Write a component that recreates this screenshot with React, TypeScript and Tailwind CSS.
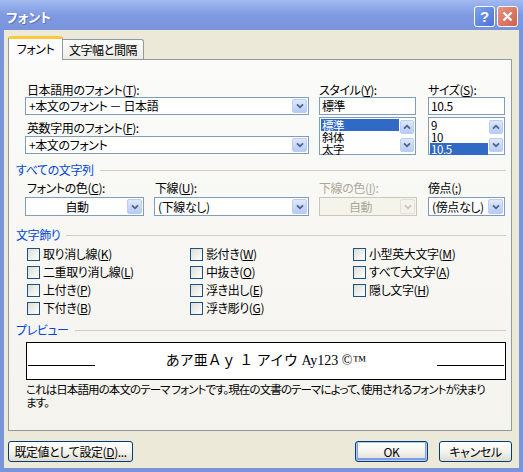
import React from 'react';

const ui = "font-['Noto_Sans_CJK_JP',sans-serif] [font-feature-settings:'palt'] text-[12px] tracking-[-0.4px] text-black";

function Chevron({ up, color = '#4d6185' }: { up?: boolean; color?: string }) {
  return (
    <svg width="8" height="6" viewBox="0 0 8 6">
      <path d={up ? 'M1 4.7 L4 1.7 L7 4.7' : 'M1 1.3 L4 4.3 L7 1.3'} fill="none" stroke={color} strokeWidth="1.8" />
    </svg>
  );
}

function DropBtn({ disabled }: { disabled?: boolean }) {
  if (disabled) {
    return (
      <div className="w-[15px] h-full rounded-[2px] border border-[#e3e1d6] bg-[#f3f2ec] flex items-center justify-center">
        <Chevron color="#c9c7ba" />
      </div>
    );
  }
  return (
    <div className="w-[15px] h-full rounded-[2px] border border-[#bccdf3] bg-gradient-to-b from-[#dfe8fd] to-[#b7cbf6] flex items-center justify-center">
      <Chevron />
    </div>
  );
}

function ScrollBtn({ up }: { up?: boolean }) {
  return (
    <div className="w-[14px] h-[14px] rounded-[2px] border border-[#bccdf3] bg-gradient-to-b from-[#dfe8fd] to-[#b7cbf6] flex items-center justify-center">
      <Chevron up={up} />
    </div>
  );
}

function Combo({
  text,
  center,
  disabled,
  className = '',
}: {
  text: string;
  center?: boolean;
  disabled?: boolean;
  className?: string;
}) {
  return (
    <div
      className={`flex p-px border ${disabled ? 'border-[#c9c7ba] bg-[#f5f4ea] text-[#aca899]' : 'border-[#7f9db9] bg-white'} ${className}`}
    >
      <div className={`flex-1 flex items-center px-[2px] leading-[14px] whitespace-nowrap ${center ? 'justify-center' : ''}`}>
        {text}
      </div>
      <DropBtn disabled={disabled} />
    </div>
  );
}

function ListBox({ items, selected }: { items: string[]; selected: number }) {
  return (
    <div className="mt-[2px] h-[38px] flex border border-[#7f9db9] bg-white p-px">
      <div className="flex-1 flex flex-col">
        {items.map((it, i) => (
          <div
            key={it}
            className={`h-[12px] leading-[12px] text-[11.5px] px-[1px] ${i === selected ? 'bg-[#316ac5] text-white' : ''}`}
          >
            {it}
          </div>
        ))}
      </div>
      <div className="w-[15px] flex flex-col justify-between items-end py-[1px]">
        <ScrollBtn up />
        <ScrollBtn />
      </div>
    </div>
  );
}

function Header({ children, className = '' }: { children: React.ReactNode; className?: string }) {
  return (
    <div className={`flex items-center h-[14px] leading-[14px] ${className}`}>
      <span className="text-[#0046d5]">{children}</span>
      <div className="flex-1 h-px bg-[#d0d0bf] ml-[6px]" />
    </div>
  );
}

function Check({ children }: { children: React.ReactNode }) {
  return (
    <div className="h-[18px] flex items-center">
      <div className="w-[13px] h-[13px] border border-[#1c5180] bg-gradient-to-br from-[#dcdcd7] to-white" />
      <span className="ml-[3px] leading-[14px]">{children}</span>
    </div>
  );
}

function Btn({ children, isDefault, className = '' }: { children: React.ReactNode; isDefault?: boolean; className?: string }) {
  return (
    <button
      className={`h-[21px] rounded-[3px] border border-[#003c74] bg-gradient-to-b from-white via-[#f4f3ee] to-[#dedbd0] flex items-center justify-center leading-[14px] ${isDefault ? 'shadow-[inset_0_0_0_1px_#b4cbf3,inset_0_-1px_0_2px_#7e9de8]' : ''} ${className}`}
    >
      {children}
    </button>
  );
}

export default function App() {
  return (
    <div className={`w-[523px] h-[472px] flex flex-col bg-[#7a94dc] ${ui}`}>
      {/* title bar */}
      <div className="h-[30px] flex items-center pl-[6px] pr-[5px] pt-[3px] bg-gradient-to-b from-[#a3baf0] via-[#7e9ae2] to-[#7a94dc]">
        <span className="text-white text-[13px] font-bold tracking-normal [text-shadow:1px_1px_0_#5a72b8]">フォント</span>
        <div className="ml-auto flex gap-[2px]">
          <div className="w-[21px] h-[21px] rounded-[3px] border border-white bg-gradient-to-br from-[#7fa3f0] to-[#4c70d9] flex items-center justify-center text-white text-[15px] font-bold leading-none font-['Liberation_Sans',sans-serif]">
            ?
          </div>
          <div className="w-[21px] h-[21px] rounded-[3px] border border-white bg-gradient-to-br from-[#e89482] to-[#cf5f4a] flex items-center justify-center">
            <svg width="11" height="11" viewBox="0 0 11 11">
              <path d="M1.5 1.5 L9.5 9.5 M9.5 1.5 L1.5 9.5" stroke="white" strokeWidth="2.2" />
            </svg>
          </div>
        </div>
      </div>

      {/* body */}
      <div className="flex-1 mx-[4px] mb-[4px] bg-[#ece9d8] pt-[6px] pl-[4px] pr-[7px] flex flex-col">
        {/* tabs */}
        <div className="h-[23px] flex items-start">
          <div className="relative z-10 h-[24px] w-[55px] bg-[#fcfcfe] border-x border-[#919b9c] border-t-[3px] border-t-[#ffc83c] rounded-t-[3px] flex items-center justify-center pb-[2px]">
            フォント
          </div>
          <div className="mt-[3px] h-[20px] w-[81px] border-t border-r border-[#919b9c] rounded-tr-[3px] bg-gradient-to-b from-white to-[#ecebe6] flex items-center justify-center">
            文字幅と間隔
          </div>
        </div>

        {/* panel */}
        <div className="h-[372px] border border-[#919b9c] bg-gradient-to-b from-[#fbfbf9] to-[#f4f3ee] pl-[7px] pr-[5px] pt-[23px] flex flex-col">
          {/* fonts row */}
          <div className="flex">
            <div className="ml-[9px] w-[284px] flex flex-col">
              <div className="h-[14px] leading-[14px] pl-[2px]">
                日本語用のフォント(<u>T</u>):
              </div>
              <Combo text="+本文のフォント － 日本語" className="h-[18px]" />
              <div className="mt-[6px] h-[14px] leading-[14px] pl-[2px]">
                英数字用のフォント(<u>F</u>):
              </div>
              <Combo text="+本文のフォント" className="mt-px h-[18px]" />
            </div>
            <div className="ml-[10px] w-[97px] flex flex-col">
              <div className="h-[14px] leading-[14px]">
                スタイル(<u>Y</u>):
              </div>
              <div className="h-[18px] border border-[#7f9db9] bg-white px-[2px] flex items-center leading-[14px]">標準</div>
              <ListBox items={['標準', '斜体', '太字']} selected={0} />
            </div>
            <div className="ml-[12px] w-[77px] flex flex-col">
              <div className="h-[14px] leading-[14px]">
                サイズ(<u>S</u>):
              </div>
              <div className="h-[18px] border border-[#7f9db9] bg-white px-[2px] flex items-center leading-[14px]">10.5</div>
              <ListBox items={['9', '10', '10.5']} selected={2} />
            </div>
          </div>

          <Header className="mt-[8px]">すべての文字列</Header>

          {/* color / underline row */}
          <div className="mt-[4px] flex">
            <div className="ml-[9px] w-[119px] flex flex-col">
              <div className="h-[14px] leading-[14px] pl-[2px]">
                フォントの色(<u>C</u>):
              </div>
              <Combo text="自動" center className="mt-[2px] h-[19px]" />
            </div>
            <div className="ml-[10px] w-[155px] flex flex-col">
              <div className="h-[14px] leading-[14px] pl-px">
                下線(<u>U</u>):
              </div>
              <Combo text="(下線なし)" className="mt-[2px] h-[19px]" />
            </div>
            <div className="ml-[10px] w-[98px] flex flex-col">
              <div className="h-[14px] leading-[14px] text-[#aca899]">
                下線の色(<u>I</u>):
              </div>
              <Combo text="自動" center disabled className="mt-[2px] h-[19px]" />
            </div>
            <div className="ml-[11px] w-[77px] flex flex-col">
              <div className="h-[14px] leading-[14px]">
                傍点(<u>;</u>)
              </div>
              <Combo text="(傍点なし)" className="mt-[2px] h-[19px]" />
            </div>
          </div>

          <Header className="mt-[12px]">文字飾り</Header>

          {/* effects */}
          <div className="mt-[3px] ml-[11px] grid grid-flow-col grid-rows-4 grid-cols-[163px_163px_1fr]">
            <Check>取り消し線(<u>K</u>)</Check>
            <Check>二重取り消し線(<u>L</u>)</Check>
            <Check>上付き(<u>P</u>)</Check>
            <Check>下付き(<u>B</u>)</Check>
            <Check>影付き(<u>W</u>)</Check>
            <Check>中抜き(<u>O</u>)</Check>
            <Check>浮き出し(<u>E</u>)</Check>
            <Check>浮き彫り(<u>G</u>)</Check>
            <Check>小型英大文字(<u>M</u>)</Check>
            <Check>すべて大文字(<u>A</u>)</Check>
            <Check>隠し文字(<u>H</u>)</Check>
          </div>

          <Header className="mt-[6px]">プレビュー</Header>

          {/* preview */}
          <div className="mt-[5px] ml-[10px] h-[38px] border border-black bg-white flex items-center px-px">
            <div className="w-[67px] h-px bg-black mt-[9px]" />
            <div className="flex-1 text-center text-[14px] leading-[16px] tracking-normal whitespace-nowrap font-['Liberation_Serif','Noto_Sans_CJK_JP',serif] [font-feature-settings:normal]">
              あア亜Ａｙ １ アイウ Ay123 ©™
            </div>
            <div className="w-[67px] h-px bg-black mt-[9px]" />
          </div>

          <div className="mt-[3px] ml-[10px] leading-[13px] text-[11.5px] tracking-[-0.9px]">
            <div className="whitespace-nowrap">
              これは日本語用の本文のテーマ フォントです。現在の文書のテーマによって、使用されるフォントが決まり
            </div>
            <div>ます。</div>
          </div>
        </div>

        {/* buttons */}
        <div className="mt-[10px] flex">
          <Btn className="w-[125px]">
            既定値として設定(<u>D</u>)...
          </Btn>
          <Btn isDefault className="ml-auto w-[73px]">
            OK
          </Btn>
          <Btn className="ml-[11px] w-[73px]">キャンセル</Btn>
        </div>
      </div>
    </div>
  );
}
